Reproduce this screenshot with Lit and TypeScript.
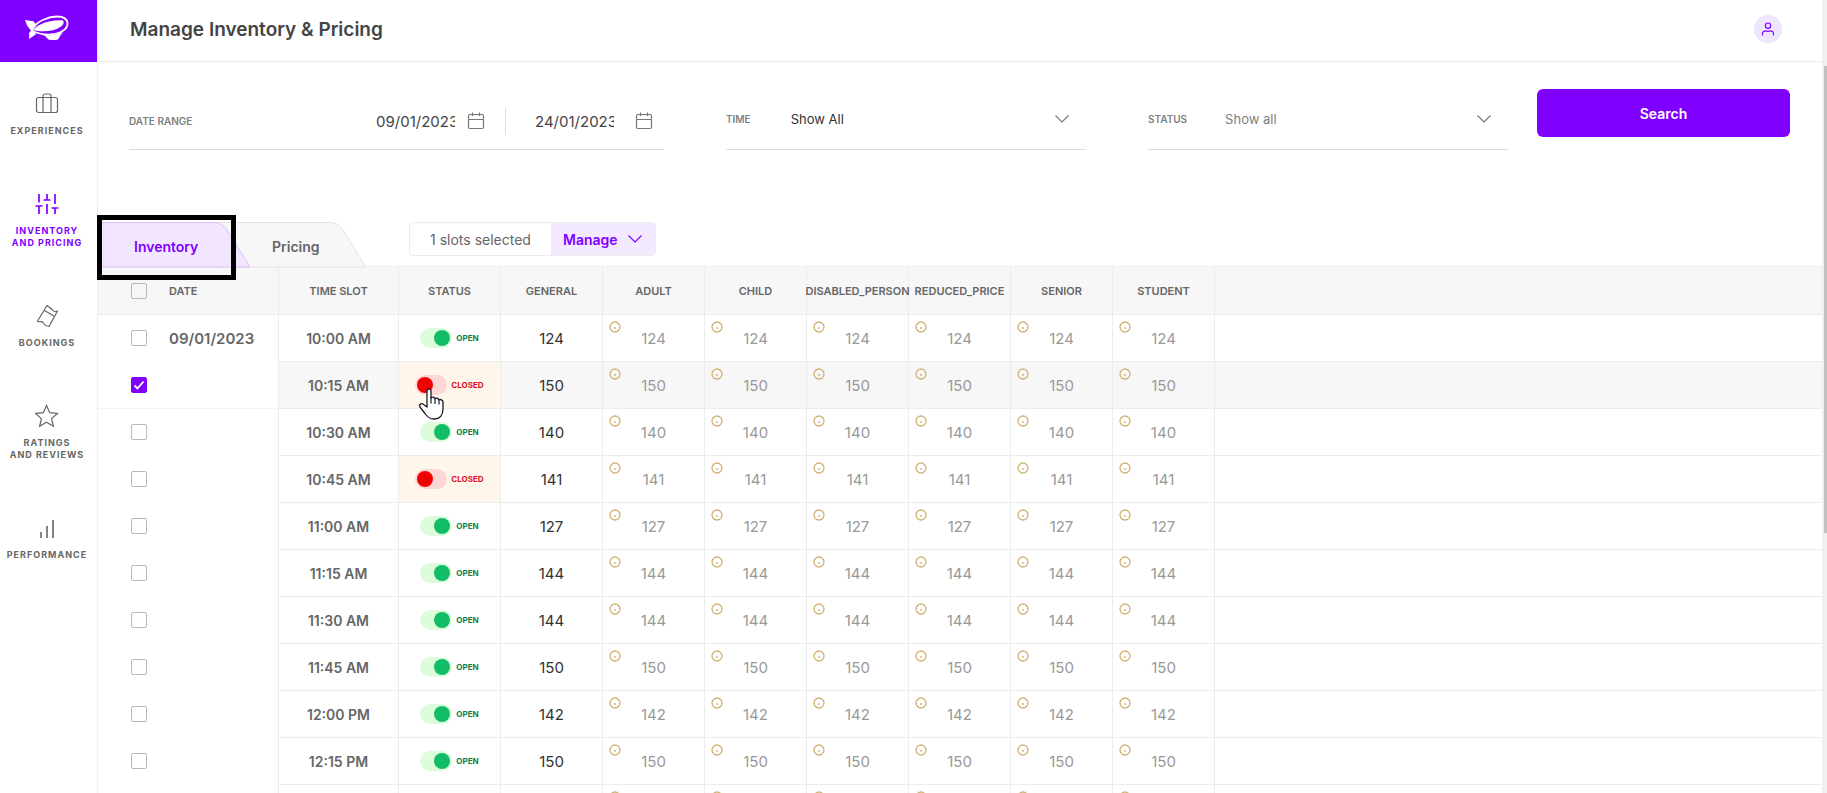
import { LitElement, html, svg, css, nothing } from "lit";
import { customElement, state } from "lit/decorators.js";
import { classMap } from "lit/directives/class-map.js";

interface Slot {
  time: string;
  open: boolean;
  seats?: number;
  selected: boolean;
}

const CATEGORIES = ["ADULT", "CHILD", "DISABLED_PERSON", "REDUCED_PRICE", "SENIOR", "STUDENT"];

const slot = (time: string, seats?: number, open = true, selected = false): Slot => ({ time, seats, open, selected });

const NAV = [
  {
    label: ["EXPERIENCES"],
    icon: svg`<rect x="1.5" y="5.500" width="21" height="15" rx="2"/><path d="M8 20.500V4a2 2 0 0 1 2-2h4a2 2 0 0 1 2 2v16.500"/>`,
  },
  {
    label: ["INVENTORY", "AND PRICING"],
    icon: svg`<path stroke-width="1.700" d="M4 2v8.500M12 2v6M20 2v10M0.500 14h7M4 14v8M8.500 8h7M12 12v10M16.500 16h7M20 16v6"/>`,
  },
  {
    label: ["BOOKINGS"],
    icon: svg`<path stroke-linejoin="round" d="M12 1.500L2.500 17c2 2 3.200-.500 5 1s1.500 4 6.500 4.500L22.500 7c-3 1.500-3.700.500-5-1S14.500 3.500 12 1.500z"/><path d="M9.500 6.500l9.500 5.500"/>`,
  },
  {
    label: ["RATINGS", "AND REVIEWS"],
    icon: svg`<path d="M11.500 1.500l3.200 7.200 7.800.700-5.900 5.200 1.800 7.700-6.900-4.100-6.900 4.100 1.800-7.700L.500 9.400l7.800-.700z"/>`,
  },
  {
    label: ["PERFORMANCE"],
    icon: svg`<path stroke-width="1.600" d="M6 16v6M12 10v12M18 4v18"/>`,
  },
];

const chevron = html`<svg class="chevron" width="16" height="10" viewBox="0 0 16 10" aria-hidden="true"><path d="M1.500 1.500L8 8l6.500-6.500" /></svg>`;

const calendar = html`<svg class="calendar" width="18" height="18" viewBox="0 0 18 18" aria-hidden="true">
  <rect x="1.500" y="2.500" width="15" height="14" rx="1.500" /><path d="M1.500 7.500h15M5.500 0.500v3.500M12.500 0.500v3.500" />
</svg>`;

@customElement("side-nav")
export class SideNav extends LitElement {
  static styles = css`
    :host { display: block; border-right: 1px solid #efefef; }
    a { color: #666; text-decoration: none; }
    .logo { display: flex; align-items: center; justify-content: center; height: 62px; padding: 0 4px 6px 0; box-sizing: border-box; background: #8000ff; }
    .items { display: flex; flex-direction: column; gap: 55px; padding: 30px 3px 0 0; }
    .item { display: flex; flex-direction: column; align-items: center; gap: 9px; }
    .item svg { fill: none; stroke: currentColor; stroke-width: 1.2; }
    .label { font-size: 9px; line-height: 12px; font-weight: 700; letter-spacing: 1px; text-align: center; white-space: nowrap; }
    .line { display: block; }
    .active { color: #8000ff; }
  `;

  render() {
    return html`
      <a class="logo" href="#" aria-label="Home">
        <svg width="44" height="26" viewBox="0 0 44 26">
          <path fill="none" stroke="#fff" stroke-width="1.800" d="M7 14C12 6 24 1.500 32 1.500c6 0 10 2.500 10.500 6.500.500 6-7 11-17 11.500C18 20 12 18 7 16" />
          <path fill="#fff" d="M8 15C14 8 27 4.500 38 5.500c1.500 2 .500 4-2 6C29 16.500 17 17.500 8 15z" />
          <path fill="#fff" d="M0 5l8.500 1.200 3 4L8 14.500l3 4.800L4 24l.300-6.500L6 15.500l-4-5z" />
          <path fill="#fff" d="M16 19.500l4 1.200c2 2.500 3 4.300 6 4.300h5c3 0 3-3.500 7-8-5 3-14 4-22 2.500z" />
        </svg>
      </a>
      <nav class="items">
        ${NAV.map(
          (n, i) => html`<a href="#" class=${classMap({ item: true, active: i === 1 })}>
            <svg width="24" height="24" viewBox="0 0 24 24" aria-hidden="true">${n.icon}</svg>
            <span class="label">${n.label.map((l) => html`<span class="line">${l}</span>`)}</span>
          </a>`
        )}
      </nav>
    `;
  }
}

@customElement("filter-bar")
export class FilterBar extends LitElement {
  static styles = css`
    :host { display: grid; grid-template-columns: 597fr 422fr 389fr 253fr; align-items: start; padding: 27px 32px 0 31px; }
    .field { display: flex; align-items: center; box-sizing: border-box; height: 61px; border-bottom: 1px solid #dcdcdc; }
    .dates { margin-right: 62px; padding-top: 4px; }
    .time { margin-right: 62px; }
    .status { margin-right: 29px; }
    .caption { color: #808080; font-size: 10px; font-weight: 600; }
    .dates .caption { flex: 1; }
    .day { display: flex; align-items: center; gap: 12px; }
    .day input { width: 79px; padding: 0; border: 0; background: none; color: #444; font: inherit; font-size: 15px; outline: 0; }
    .to { margin-left: 20px; padding: 4px 11px 4px 29px; border-left: 1px solid #dcdcdc; gap: 21px; }
    svg { flex: none; fill: none; stroke: #777; stroke-width: 1.2; }
    .choice { position: relative; display: flex; flex: 1; align-items: center; }
    .choice .chevron { position: absolute; right: 16px; pointer-events: none; }
    select { width: 100%; padding: 0; border: 0; background: none; appearance: none; font: inherit; font-size: 13px; color: #333; outline: 0; }
    .time .choice { margin-left: 40px; }
    .status .choice { margin-left: 38px; }
    .status select { color: #808080; }
    button { height: 48px; border: 0; border-radius: 6px; background: #8000ff; color: #fff; font: inherit; font-size: 14px; font-weight: 600; cursor: pointer; }
  `;

  render() {
    return html`
      <div class="field dates">
        <span class="caption">DATE RANGE</span>
        <label class="day"><input aria-label="From" value="09/01/2023" />${calendar}</label>
        <label class="day to"><input aria-label="To" value="24/01/2023" />${calendar}</label>
      </div>
      <div class="field time">
        <label class="caption" for="time">TIME</label>
        <div class="choice"><select id="time"><option>Show All</option></select>${chevron}</div>
      </div>
      <div class="field status">
        <label class="caption" for="status">STATUS</label>
        <div class="choice"><select id="status"><option>Show all</option></select>${chevron}</div>
      </div>
      <button type="button">Search</button>
    `;
  }
}

@customElement("slot-table")
export class SlotTable extends LitElement {
  static styles = css`
    :host { display: block; }
    table { width: 100%; table-layout: fixed; border-collapse: separate; border-spacing: 0; border-top: 1px solid #ececec; color: #666; }
    .c-date { width: 181px; }
    .c-time { width: 120px; }
    .c-num { width: 102px; }
    th, td { box-sizing: border-box; height: 47px; padding: 0; border-right: 1px solid #ececec; border-bottom: 1px solid #ececec; text-align: center; font-size: 15px; font-weight: 400; white-space: nowrap; }
    th:last-child, td:last-child { border-right: 0; }
    thead th { height: 48px; background: #f7f7f7; font-size: 11px; font-weight: 600; }
    .head { display: flex; justify-content: center; }
    tbody .date { border-bottom-color: transparent; }
    .picked .date { border-bottom-color: #f5f5f5; }
    .pick { display: flex; align-items: center; gap: 22px; padding-left: 33px; }
    .date, .time { font-weight: 600; }
    .time { font-size: 14px; }
    .picked td:not(.date) { background: #f7f7f7; }
    .box { appearance: none; box-sizing: border-box; flex: none; width: 16px; height: 16px; margin: 0; border: 1px solid #b8b8b8; border-radius: 2px; background: #fff; }
    thead .box { background: #f7f7f7; }
    .box:checked { border-color: #8000ff; background: #8000ff url("data:image/svg+xml,%3Csvg xmlns='http://www.w3.org/2000/svg' viewBox='0 0 14 14'%3E%3Cpath d='M2.500 7.500l3 3 6-7' fill='none' stroke='white' stroke-width='1.800'/%3E%3C/svg%3E") center / 14px 14px; }
    .general { color: #333; }
    td.closed, .picked td.closed { background: #fff7ec; }
    .switch { position: relative; display: flex; align-items: center; justify-content: center; gap: 4px; color: #0d8044; font-size: 8px; font-weight: 700; }
    .switch input { appearance: none; display: flex; align-items: center; justify-content: flex-end; box-sizing: border-box; width: 32px; height: 20px; margin: 0; padding: 2px; border-radius: 10px; background: #dcfcdc; }
    .switch input::before { content: ""; width: 16px; height: 16px; border-radius: 50%; background: #12bd67; }
    .closed .switch { color: #d8101c; }
    .closed .switch input { justify-content: flex-start; background: #ffd6d6; }
    .closed .switch input::before { background: #f00000; }
    .pointer { position: absolute; left: 19px; top: 13px; z-index: 2; }
    .quota { position: relative; color: #999; }
    .info { position: absolute; left: 6px; top: 6px; fill: none; stroke: #d3b275; stroke-width: 1.300; }
  `;

  @state() private slots: Slot[] = [
    slot("10:00 AM", 124),
    slot("10:15 AM", 150, false, true),
    slot("10:30 AM", 140),
    slot("10:45 AM", 141, false),
    slot("11:00 AM", 127),
    slot("11:15 AM", 144),
    slot("11:30 AM", 144),
    slot("11:45 AM", 150),
    slot("12:00 PM", 142),
    slot("12:15 PM", 150),
    slot(""),
  ];

  private change(i: number, patch: Partial<Slot>) {
    this.slots = this.slots.map((s, j) => (i === j ? { ...s, ...patch } : s));
  }

  private toggle(s: Slot, i: number) {
    return html`<label class="switch">
      <input type="checkbox" role="switch" .checked=${s.open}
        @change=${(e: Event) => this.change(i, { open: (e.target as HTMLInputElement).checked })} />
      ${s.open ? "OPEN" : "CLOSED"}
      ${i === 1
        ? html`<svg class="pointer" width="26" height="32" viewBox="0 0 26 32" aria-hidden="true">
            <path fill="#fff" stroke="#1c1c28" stroke-width="1.300" stroke-linejoin="round" d="M9 19V3c0-2.600 4-2.600 4 0v7c1-1.300 3.700-1 4 .800 1-1.100 3.500-.700 4 1 1.200-.700 4 0 4 2.200V21c0 6-3 10-9 10-5 0-7-2.500-9-5.500l-5-6.500c-1.500-2.500 1.500-4.300 3.500-2.500z" />
            <path fill="none" stroke="#1c1c28" stroke-width="1.200" d="M13 9v6.500M17 11v5M21 12v4.500" />
          </svg>`
        : nothing}
    </label>`;
  }

  private row(s: Slot, i: number) {
    return html`<tr class=${classMap({ picked: s.selected })}>
      <td class="date">
        <label class="pick">
          <input class="box" type="checkbox" aria-label=${"Select " + s.time} .checked=${s.selected}
            @change=${(e: Event) => this.change(i, { selected: (e.target as HTMLInputElement).checked })} />
          ${i === 0 ? "09/01/2023" : nothing}
        </label>
      </td>
      <td class="time">${s.time}</td>
      <td class=${classMap({ closed: !s.open })}>${s.time ? this.toggle(s, i) : nothing}</td>
      <td class="general">${s.seats ?? nothing}</td>
      ${CATEGORIES.map(
        () => html`<td class="quota">
          <svg class="info" width="12" height="12" viewBox="0 0 12 12" aria-hidden="true"><circle cx="6" cy="6" r="5" /><path d="M5 7h2" stroke-width="2" stroke-opacity="0.700" /></svg>
          ${s.seats ?? nothing}
        </td>`
      )}
      <td></td>
    </tr>`;
  }

  render() {
    return html`<table>
      <colgroup>
        <col class="c-date" /><col class="c-time" /><col class="c-num" /><col class="c-num" />
        ${CATEGORIES.map(() => html`<col class="c-num" />`)}
        <col />
      </colgroup>
      <thead>
        <tr>
          <th><label class="pick"><input class="box" type="checkbox" aria-label="Select all" />DATE</label></th>
          ${["TIME SLOT", "STATUS", "GENERAL", ...CATEGORIES].map((h) => html`<th scope="col"><span class="head">${h}</span></th>`)}
          <th></th>
        </tr>
      </thead>
      <tbody>${this.slots.map((s, i) => this.row(s, i))}</tbody>
    </table>`;
  }
}

@customElement("app-root")
export class AppRoot extends LitElement {
  static styles = css`
    :host { display: grid; grid-template-columns: 98px minmax(0, 1fr) 5px; grid-template-rows: 100vh; height: 100vh; overflow: hidden; background: #fff; color: #444; font-family: Inter, "Liberation Sans", sans-serif; }
    main { min-width: 0; min-height: 0; }
    header { display: flex; align-items: center; justify-content: space-between; box-sizing: border-box; height: 62px; padding: 0 40px 4px 32px; border-bottom: 1px solid #ececec; }
    h1 { margin: 0; padding-top: 2px; font-size: 19px; line-height: 24px; font-weight: 600; }
    .user { display: flex; align-items: center; justify-content: center; width: 28px; height: 28px; padding: 0; border: 0; border-radius: 50%; background: #f0e5ff; }
    .user svg { fill: none; stroke: #8000ff; stroke-width: 1.2; }
    .bar { position: relative; display: flex; align-items: flex-start; height: 44px; margin-top: 72px; }
    .tabs { display: flex; }
    .tab { position: relative; display: flex; align-items: center; height: 46px; padding: 2px 0 0 36px; border: 0; background: none; font: inherit; font-size: 14px; font-weight: 600; color: #666; z-index: 1; }
    .tab svg { position: absolute; right: 0; top: 0; z-index: -1; fill: #f7f7f7; stroke: #e2e2e2; }
    .tab.first { width: 153px; color: #8000ff; z-index: 2; }
    .tab.first svg { fill: #f2e6ff; stroke: #dcc0fb; }
    .tab.second { width: 116px; padding-left: 21px; }
    .marker { position: absolute; left: -1px; top: -7px; z-index: 3; box-sizing: border-box; width: 139px; height: 65px; border: 5px solid #000; pointer-events: none; }
    .selection { display: flex; box-sizing: border-box; height: 34px; margin-left: 42px; border: 1px solid #ececec; border-radius: 4px; overflow: hidden; font-size: 14px; color: #666; }
    .count { display: flex; align-items: center; justify-content: center; width: 141px; }
    .manage { display: flex; align-items: center; justify-content: space-between; width: 104px; padding: 0 12px; border: 0; background: #f3eaff; color: #8000ff; font: inherit; font-weight: 600; }
    .manage svg { fill: none; stroke: #8000ff; stroke-width: 1.2; }
    .rail { padding: 66px 0 0 2px; background: #f0f0f0; }
    .thumb { height: 467px; background: #c1c1c1; }
  `;

  render() {
    return html`
      <side-nav></side-nav>
      <main>
        <header>
          <h1>Manage Inventory &amp; Pricing</h1>
          <button class="user" type="button" aria-label="Account">
            <svg width="14" height="14" viewBox="0 0 14 14"><circle cx="7" cy="3.700" r="2.700" /><path d="M1.500 13.500V11.500a2.300 2.300 0 0 1 2.300-2.300h6.400a2.300 2.300 0 0 1 2.300 2.300v2" /></svg>
          </button>
        </header>
        <filter-bar></filter-bar>
        <div class="bar">
          <div class="tabs" role="tablist">
            <button class="tab first" role="tab" aria-selected="true">
              <svg width="153" height="46" viewBox="0 0 153 46"><path d="M0 .500H116q8 0 13 7.500L152 45H0" /></svg>
              Inventory
            </button>
            <button class="tab second" role="tab" aria-selected="false">
              <svg width="153" height="46" viewBox="0 0 153 46"><path d="M0 .500H116q8 0 13 7.500L152 45H0" /></svg>
              Pricing
            </button>
          </div>
          <div class="selection">
            <span class="count">1 slots selected</span>
            <button class="manage" type="button">Manage ${chevron}</button>
          </div>
          <div class="marker"></div>
        </div>
        <slot-table></slot-table>
      </main>
      <div class="rail"><div class="thumb"></div></div>
    `;
  }
}
